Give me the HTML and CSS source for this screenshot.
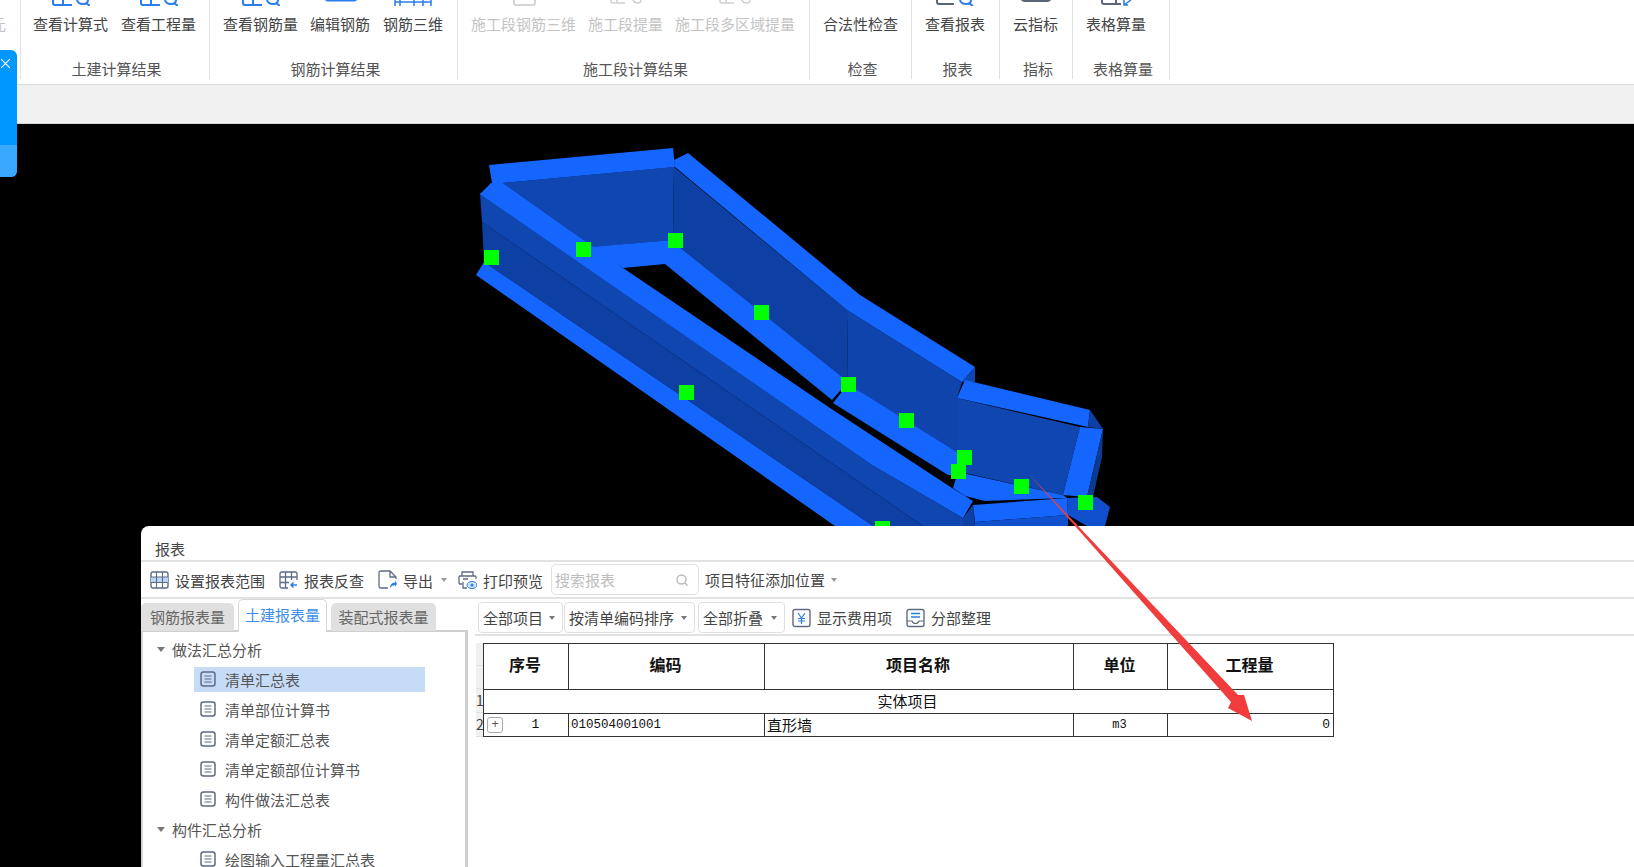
FILE: index.html
```html
<!DOCTYPE html>
<html lang="zh-CN">
<head>
<meta charset="utf-8">
<title>报表</title>
<link rel="stylesheet" href="styles.css">
</head>
<body>
<svg class="defs" width="0" height="0" aria-hidden="true">
  <symbol id="i-calc" viewBox="0 0 38 6">
    <path d="M1 0V3Q1 5 3 5H20M11 0V5M25 0Q26 4 31 4Q36 4 36 0M34 3L38 6" fill="none" stroke="#2b7de9" stroke-width="2"/>
  </symbol>
  <symbol id="i-report" viewBox="0 0 38 6">
    <path d="M1 0V2Q1 4 3 4H18" fill="none" stroke="#5c6478" stroke-width="2"/>
    <path d="M24 0Q25 4 30 4Q35 4 35 0M33 3L37 6" fill="none" stroke="#2b7de9" stroke-width="2"/>
  </symbol>
  <symbol id="i-edit" viewBox="0 0 38 6">
    <path d="M4 0H36Q35 1.500 33 1.500H7Q5 1.500 4 0Z" fill="#2b7de9"/>
  </symbol>
  <symbol id="i-rebar" viewBox="0 0 38 6">
    <path d="M1 0V6M6 0V6M20 0V6M29 0V6M37 0V6M1 2H37" fill="none" stroke="#2b7de9" stroke-width="1.500"/>
  </symbol>
  <symbol id="i-gray" viewBox="0 0 38 6">
    <path d="M9 0V3Q9 5 11 5H28Q30 5 30 3V0" fill="none" stroke="#c8c8c8" stroke-width="1.500"/>
  </symbol>
  <symbol id="i-grayb" viewBox="0 0 38 6">
    <path d="M4 0V1Q4 3 6 3H18M10 0V3M26 0Q27 3 31 3Q34 3 34 0" fill="none" stroke="#d0d0d0" stroke-width="1.500"/>
  </symbol>
  <symbol id="i-cloud" viewBox="0 0 38 6">
    <path d="M4 0Q5 2 8 2H30Q33 2 34 0Z" fill="#5c6478"/>
  </symbol>
  <symbol id="i-sheet" viewBox="0 0 38 6">
    <path d="M5 0V2Q5 4 7 4H24M19 0V4" fill="none" stroke="#5c6478" stroke-width="2"/>
    <path d="M27 5L34 0M27 0V5H31" fill="none" stroke="#2b7de9" stroke-width="1.500"/>
  </symbol>
  <symbol id="i-doc" viewBox="0 0 16 16">
    <rect x="1" y="1" width="14" height="14" rx="2.500" fill="none" stroke="#5f6b82" stroke-width="1.500"/>
    <path d="M4.500 5H11.500M4.500 8H11.500M4.500 11H11.500" stroke="#5f6b82" stroke-width="1.200"/>
  </symbol>
</svg>

<header class="ribbon">
  <section class="group group-cut"><div class="btns"><div class="btn"><span class="icon"></span><span class="lbl cut faded">元</span></div></div></section>
  <section class="group g1">
    <div class="btns">
      <div class="btn"><span class="icon"><svg><use href="#i-calc"/></svg></span><span class="lbl">查看计算式</span></div>
      <div class="btn"><span class="icon"><svg><use href="#i-calc"/></svg></span><span class="lbl">查看工程量</span></div>
    </div>
    <div class="glabel">土建计算结果</div>
  </section>
  <section class="group g2">
    <div class="btns">
      <div class="btn"><span class="icon"><svg><use href="#i-calc"/></svg></span><span class="lbl">查看钢筋量</span></div>
      <div class="btn"><span class="icon"><svg><use href="#i-edit"/></svg></span><span class="lbl">编辑钢筋</span></div>
      <div class="btn"><span class="icon"><svg><use href="#i-rebar"/></svg></span><span class="lbl">钢筋三维</span></div>
    </div>
    <div class="glabel">钢筋计算结果</div>
  </section>
  <section class="group g3">
    <div class="btns">
      <div class="btn"><span class="icon"><svg><use href="#i-gray"/></svg></span><span class="lbl faded">施工段钢筋三维</span></div>
      <div class="btn"><span class="icon"><svg><use href="#i-grayb"/></svg></span><span class="lbl faded">施工段提量</span></div>
      <div class="btn"><span class="icon"><svg><use href="#i-grayb"/></svg></span><span class="lbl faded">施工段多区域提量</span></div>
    </div>
    <div class="glabel">施工段计算结果</div>
  </section>
  <section class="group g4">
    <div class="btns"><div class="btn"><span class="icon"></span><span class="lbl">合法性检查</span></div></div>
    <div class="glabel">检查</div>
  </section>
  <section class="group g5">
    <div class="btns"><div class="btn"><span class="icon"><svg><use href="#i-report"/></svg></span><span class="lbl">查看报表</span></div></div>
    <div class="glabel">报表</div>
  </section>
  <section class="group g6">
    <div class="btns"><div class="btn"><span class="icon"><svg><use href="#i-cloud"/></svg></span><span class="lbl">云指标</span></div></div>
    <div class="glabel">指标</div>
  </section>
  <section class="group g7">
    <div class="btns"><div class="btn"><span class="icon"><svg><use href="#i-sheet"/></svg></span><span class="lbl">表格算量</span></div></div>
    <div class="glabel">表格算量</div>
  </section>
</header>

<div class="band"></div>

<main class="viewport">
  <svg class="scene" viewBox="0 124 1634 743" aria-hidden="true">
    <polygon class="f1" points="503,183 674,167 673,240 593,247"/>
    <polygon class="f2" points="674,167 847,310 848,384 683,250 673,240"/>
    <polygon class="f5" points="847,310 962,382 957,398 957,455 848,384"/>
    <polygon class="st" points="489,165 673,148 675,167 503,183 492,183"/>
    <polygon class="st" points="674,160 688,153 860,295 975,367 962,382 847,310 675,167"/>
    <polygon class="f1" points="975,367 962,382 975,382"/>
    <polygon class="st" points="590,247 672,240 683,250 665,264 623,268"/>
    <polygon class="st" points="668,244 683,250 848,382 832,400 665,264"/>
    <polygon class="st" points="848,384 958,453 958,475 948,475 833,403"/>
    <polygon class="f1" points="480,193 482,222 923,526 963,526 963,518 872,465"/>
    <polygon class="f2" points="482,222 484,262 873,526 923,526"/>
    <polygon class="st" points="480,194 491,183 503,183 623,268 830,408 952,488 973,501 963,518 872,465"/>
    <polygon class="f2" points="963,518 973,505 975,526 963,526"/>
    <polygon class="st" points="484,262 476,275 835,526 873,526"/>
    <polygon class="f1" points="957,398 1080,427 1063,495 965,473 957,460"/>
    <polygon class="st" points="965,380 1090,410 1088,427 957,398"/>
    <polygon class="f2" points="1090,410 1103,429 1088,427"/>
    <polygon class="st" points="1080,427 1103,429 1087,497 1063,495"/>
    <polygon class="f3" points="1103,429 1102,457 1093,497 1087,497"/>
    <polygon class="st" points="953,488 958,472 1063,495 1067,498 985,501 965,496"/>
    <polygon class="st" points="973,505 1067,498 1068,515 975,522"/>
    <polygon class="f4" points="975,522 1068,515 1068,526 975,526"/>
    <polygon class="f4" points="1067,498 1097,497 1110,507 1105,526 1087,526 1068,515"/>
    <rect class="node" x="484" y="250" width="15" height="15"/>
    <rect class="node" x="576" y="242" width="15" height="15"/>
    <rect class="node" x="668" y="233" width="15" height="15"/>
    <rect class="node" x="754" y="305" width="15" height="15"/>
    <rect class="node" x="679" y="385" width="15" height="15"/>
    <rect class="node" x="841" y="377" width="15" height="15"/>
    <rect class="node" x="899" y="413" width="15" height="15"/>
    <rect class="node" x="957" y="450" width="15" height="15"/>
    <rect class="node" x="951" y="464" width="15" height="15"/>
    <rect class="node" x="1014" y="479" width="15" height="15"/>
    <rect class="node" x="1078" y="495" width="15" height="15"/>
    <rect class="node" x="875" y="521" width="15" height="15"/>
  </svg>

  <section class="dialog">
    <div class="title">报表</div>
    <div class="toolbar">
      <div class="tool t1">
        <svg class="ti" viewBox="0 0 19 20"><rect x="1" y="2" width="17" height="16" rx="2" fill="none" stroke="#5f6b82" stroke-width="1.400"/><rect x="1" y="7" width="17" height="5" fill="#b9d6f7"/><path d="M1 7H18M1 12.500H18M6.500 2V18M12.500 2V18" stroke="#5f6b82" stroke-width="1.100"/></svg>
        <span>设置报表范围</span>
      </div>
      <div class="tool t2">
        <svg class="ti" viewBox="0 0 19 20"><path d="M9 18H3Q1 18 1 16V4Q1 2 3 2H16Q18 2 18 4V10M1 7H18M1 12.500H10M6.500 2V18M12.500 2V10" fill="none" stroke="#5f6b82" stroke-width="1.300"/><path d="M18 15H12M14.500 12.500L12 15L14.500 17.500" fill="none" stroke="#2b7de9" stroke-width="1.500"/></svg>
        <span>报表反查</span>
      </div>
      <div class="tool t3">
        <svg class="ti" viewBox="0 0 19 20"><path d="M10 18H3Q1 18 1 16V3Q1 1 3 1H12L18 7V9M12 1V7H18" fill="none" stroke="#5f6b82" stroke-width="1.300"/><path d="M12 18Q12 13 17 12.500V10.500L19 14L17 16.500V15Q14 15 12 18Z" fill="#2b7de9"/></svg>
        <span>导出</span>
        <i class="caret c-export"></i>
      </div>
      <div class="tool t4">
        <svg class="ti" viewBox="0 0 19 20"><path d="M4 6V2H15V6M4 14H2Q1 14 1 13V7Q1 6 2 6H17Q18 6 18 7V9M5 9H10M5 12V18H9" fill="none" stroke="#5f6b82" stroke-width="1.300"/><ellipse cx="14" cy="15" rx="5" ry="3.500" fill="#cfe3fa" stroke="#2b7de9"/><circle cx="14" cy="15" r="1.500" fill="#2b7de9"/></svg>
        <span>打印预览</span>
      </div>
      <div class="search">
        <span>搜索报表</span>
        <svg class="sicon" viewBox="0 0 14 14"><circle cx="6.500" cy="6.500" r="4.500" fill="none" stroke="#bbb" stroke-width="1.400"/><path d="M10 10L12.500 12.500" stroke="#bbb" stroke-width="1.400"/></svg>
      </div>
      <div class="tool t5"><span>项目特征添加位置</span><i class="caret c-small"></i></div>
    </div>

    <div class="body">
      <div class="left">
        <div class="tabs">
          <div class="tab">钢筋报表量</div>
          <div class="tab active">土建报表量</div>
          <div class="tab wide">装配式报表量</div>
        </div>
        <div class="tree">
          <div class="node-row"><i class="tw"></i>做法汇总分析</div>
          <div class="leaf selected"><svg class="di"><use href="#i-doc"/></svg>清单汇总表</div>
          <div class="leaf"><svg class="di"><use href="#i-doc"/></svg>清单部位计算书</div>
          <div class="leaf"><svg class="di"><use href="#i-doc"/></svg>清单定额汇总表</div>
          <div class="leaf"><svg class="di"><use href="#i-doc"/></svg>清单定额部位计算书</div>
          <div class="leaf"><svg class="di"><use href="#i-doc"/></svg>构件做法汇总表</div>
          <div class="node-row"><i class="tw"></i>构件汇总分析</div>
          <div class="leaf"><svg class="di"><use href="#i-doc"/></svg>绘图输入工程量汇总表</div>
        </div>
      </div>

      <div class="right">
        <div class="filters">
          <div class="drop d1">全部项目<i class="caret"></i></div>
          <div class="drop d2">按清单编码排序<i class="caret"></i></div>
          <div class="drop d3">全部折叠<i class="caret"></i></div>
          <div class="tool f-fee">
            <svg class="ti" viewBox="0 0 19 20"><rect x="1" y="1.500" width="17" height="17" rx="2" fill="none" stroke="#5f6b82" stroke-width="1.400"/><path d="M6 5L9.500 10L13 5M9.500 10V16M6 10.500H13M6 13H13" fill="none" stroke="#2b7de9" stroke-width="1.200"/></svg>
            <span>显示费用项</span>
          </div>
          <div class="tool f-sort">
            <svg class="ti" viewBox="0 0 19 20"><rect x="1" y="1.500" width="17" height="17" rx="2" fill="none" stroke="#5f6b82" stroke-width="1.400"/><path d="M1 13H6Q7 15.500 9.500 15.500Q12 15.500 13 13H18" fill="none" stroke="#5f6b82" stroke-width="1.200"/><path d="M5 5.500H14M5 9H14" stroke="#2b7de9" stroke-width="1.300"/></svg>
            <span>分部整理</span>
          </div>
        </div>
        <div class="sheet">
          <div class="gutter">
            <div class="gh"></div><div class="gh"></div>
            <div class="gn">1</div><div class="gn">2</div>
          </div>
          <table class="report">
            <colgroup><col class="c1"><col class="c2"><col class="c3"><col class="c4"><col class="c5"></colgroup>
            <tr class="hd"><th>序号</th><th>编码</th><th>项目名称</th><th>单位</th><th>工程量</th></tr>
            <tr class="r-sec"><td colspan="5" class="sec">实体项目</td></tr>
            <tr class="r-data">
              <td class="ctr seq"><span class="plus">+</span>1</td>
              <td class="code">010504001001</td>
              <td class="name">直形墙</td>
              <td class="ctr unit">m3</td>
              <td class="num">0</td>
            </tr>
          </table>
        </div>
      </div>
    </div>
  </section>
</main>

<aside class="widget">
  <svg class="widget-x" viewBox="0 0 10 10" aria-hidden="true"><path d="M0 0L10 10M10 0L0 10" stroke="#fff" stroke-width="1.200"/></svg>
  <div class="widget-low"></div>
</aside>

<svg class="arrow" viewBox="0 0 1634 867" aria-hidden="true">
  <polygon points="1028,473 1238,695 1244,695 1252,721 1228,708 1231,702"/>
</svg>
</body>
</html>
```
FILE: styles.css
```css
* { box-sizing: border-box; }
html, body { margin: 0; height: 100%; }
body {
  width: 1634px;
  height: 867px;
  overflow: hidden;
  position: relative;
  display: flex;
  flex-direction: column;
  font-family: "Noto Sans CJK SC", "Noto Sans", sans-serif;
  font-size: 15px;
  color: #444;
  background: #000;
}
.defs { position: absolute; }

/* ribbon */
.ribbon {
  height: 85px;
  flex: none;
  display: flex;
  background: #fff;
  border-bottom: 1px solid #dcdcdc;
  overflow: hidden;
}
.group {
  height: 79px;
  border-right: 1px solid #e2e2e2;
  display: flex;
  flex-direction: column;
  padding-left: 13px;
  flex: none;
}
.group-cut { width: 21px; margin-right: -1px; padding-left: 0; overflow: hidden; }
.g1 { width: 190px; }
.g2 { width: 248px; }
.g3 { width: 352px; }
.g4 { width: 102px; }
.g5 { width: 88px; }
.g6 { width: 73px; }
.g7 { width: 97px; }
.btns { display: flex; gap: 12px; height: 60px; }
.g1 .btns { gap: 13px; }
.g2 .btn:last-child { margin-left: 1px; }
.btn { display: flex; flex-direction: column; align-items: center; }
.icon { height: 14px; display: block; }
.icon svg { display: block; width: 38px; height: 6px; }
.lbl { line-height: 20px; white-space: nowrap; }
.cut { margin-left: -9px; align-self: flex-start; }
.faded { color: #c4c4c4; }
.glabel {
  margin-left: -13px;
  padding-left: 4px;
  line-height: 20px;
  text-align: center;
  color: #555;
  white-space: nowrap;
}

.band {
  height: 39px;
  flex: none;
  background: #f0f0f0;
  border-bottom: 1px solid #d6d6d6;
}

/* canvas */
.viewport { position: relative; flex: 1; background: #000; overflow: hidden; }
.scene { display: block; width: 1634px; height: 743px; }
.st { fill: #1565ff; }
.f1 { fill: #1046b0; }
.f2 { fill: #0e3fa3; }
.f3 { fill: #0c3a8e; }
.f4 { fill: #1050cc; }
.f5 { fill: #0f44ad; }
.node { fill: #00ff00; }

.arrow { position: absolute; left: 0; top: 0; width: 1634px; height: 867px; pointer-events: none; }
.arrow polygon { fill: #f03c3c; }

.widget {
  position: absolute;
  left: 0;
  top: 50px;
  width: 17px;
  height: 127px;
  background: #0097ff;
  border-radius: 0 6px 6px 0;
  overflow: hidden;
  display: flex;
  flex-direction: column;
  justify-content: flex-end;
}
.widget-x { position: absolute; left: 1px; top: 9px; width: 9px; height: 9px; }
.widget-low { height: 32px; background: #3aa8ff; }

/* dialog */
.dialog {
  position: absolute;
  left: 141px;
  top: 402px;
  right: 0;
  bottom: 0;
  background: #fff;
  border-radius: 8px 0 0 0;
  overflow: hidden;
  display: flex;
  flex-direction: column;
}
.title {
  height: 36px;
  flex: none;
  padding: 12px 0 0 14px;
  line-height: 22px;
  border-bottom: 2px solid #e2e2e2;
  color: #444;
}
.toolbar {
  height: 37px;
  flex: none;
  display: flex;
  align-items: center;
  padding-left: 9px;
  border-bottom: 2px solid #e2e2e2;
  white-space: nowrap;
}
.tool { display: flex; align-items: center; gap: 6px; }
.ti { width: 19px; height: 20px; flex: none; }
.t1 span, .t2 span, .t3 span, .t4 span { padding-top: 1px; }
.t2 { margin-left: 14px; }
.t3 { margin-left: 14px; }
.t4 { margin-left: 11px; }
.t5 { margin-left: 6px; gap: 6px; }
.caret {
  display: inline-block;
  width: 0;
  height: 0;
  border-left: 3.500px solid transparent;
  border-right: 3.500px solid transparent;
  border-top: 4px solid #777;
}
.c-export { margin-left: 2px; border-top-color: #999; }
.c-small { border-top-color: #999; }
.search {
  width: 148px;
  height: 31px;
  margin-left: 8px;
  border: 1px solid #e0e0e0;
  border-radius: 5px;
  display: flex;
  align-items: center;
  justify-content: space-between;
  padding: 0 9px 0 3px;
  font-size: 15px;
  color: #bdbdbd;
}
.sicon { width: 14px; height: 14px; }

.body { flex: 1; display: flex; min-height: 0; }
.left { width: 327px; flex: none; display: flex; flex-direction: column; }
.tabs { height: 33px; flex: none; display: flex; align-items: flex-end; gap: 4px; border-bottom: 2px solid #cfcfcf; }
.tab {
  width: 93px;
  height: 28px;
  background: #e0e0e0;
  border-radius: 5px 5px 0 0;
  text-align: center;
  line-height: 27px;
  color: #666;
  margin-bottom: -1px;
  flex: none;
}
.tab.wide { width: 105px; }
.tab.active {
  width: 89px;
  height: 33px;
  line-height: 29px;
  background: #fff;
  border: 1px solid #d8d8d8;
  border-bottom: none;
  color: #3d8fe8;
  margin-bottom: -2px;
  position: relative;
}
.tree {
  flex: 1;
  border-left: 2px solid #d4d4d4;
  border-right: 3px solid #cfcfcf;
  padding-top: 2px;
  color: #555;
}
.node-row { height: 30px; display: flex; align-items: center; padding-left: 14px; gap: 7px; }
.tw {
  width: 0;
  height: 0;
  border-left: 4.500px solid transparent;
  border-right: 4.500px solid transparent;
  border-top: 5px solid #777;
}
.leaf {
  height: 30px;
  margin-left: 51px;
  width: 231px;
  display: flex;
  align-items: center;
  padding-left: 6px;
  gap: 9px;
  white-space: nowrap;
}
.leaf.selected { background: linear-gradient(#fff 3px, #c6dcf6 3px, #c6dcf6 28px, #fff 28px); }
.di { width: 16px; height: 16px; flex: none; }

.right { flex: 1; margin-left: 7px; display: flex; flex-direction: column; }
.filters {
  height: 37px;
  flex: none;
  display: flex;
  align-items: center;
  border-bottom: 2px solid #e2e2e2;
  padding: 2px 0 0 3px;
  white-space: nowrap;
}
.drop {
  height: 31px;
  border: 1px solid #e0e0e0;
  border-radius: 4px;
  display: flex;
  align-items: center;
  justify-content: space-between;
  padding: 0 7px 0 4px;
  margin-right: 1px;
}
.d1 { width: 85px; }
.d2 { width: 131px; }
.d3 { width: 87px; margin-left: 2px; }
.f-fee { margin-left: 6px; gap: 6px; }
.f-sort { margin-left: 14px; gap: 6px; }

.sheet { margin-top: 7px; margin-left: 1px; display: flex; align-items: flex-start; }
.gutter { width: 7px; flex: none; }
.gh { height: 23px; background: #f0f0f0; border-bottom: 1px solid #e0e0e0; }
.gn { height: 24px; background: #f0f0f0; border-bottom: 1px solid #e0e0e0; line-height: 22px; font-size: 14px; color: #444; }
.report {
  border-collapse: collapse;
  table-layout: fixed;
  width: 850px;
  color: #111;
  font-size: 15px;
}
.c1 { width: 85px; }
.c2 { width: 196px; }
.c3 { width: 309px; }
.c4 { width: 94px; }
.c5 { width: 166px; }
.report th, .report td { border: 1px solid #333; padding: 0; line-height: 20px; }
.report th { font-weight: 700; font-size: 16px; padding: 0 2px 6px 0; }
.report .hd th { height: 46px; }
.r-sec td { height: 24px; }
.r-data td { height: 23px; }
.report .sec { text-align: center; padding-right: 2px; padding-bottom: 1px; }
.ctr { text-align: center; }
.report .seq { font-family: "Liberation Mono", monospace; font-size: 13px; position: relative; padding-left: 19px; }
.plus {
  position: absolute;
  left: 3px;
  top: 3px;
  width: 16px;
  height: 16px;
  border: 1px solid #aaa;
  border-radius: 3px;
  font-size: 12px;
  line-height: 14px;
  text-align: center;
  color: #555;
}
.report .code { font-family: "Liberation Mono", monospace; font-size: 12.500px; padding-left: 2px; }
.report .name { padding: 0 0 1px 2px; }
.report .unit { font-family: "Liberation Mono", monospace; font-size: 12px; padding-right: 2px; }
.report .num { text-align: right; padding-right: 3px; font-family: "Liberation Mono", monospace; font-size: 13px; }
```
